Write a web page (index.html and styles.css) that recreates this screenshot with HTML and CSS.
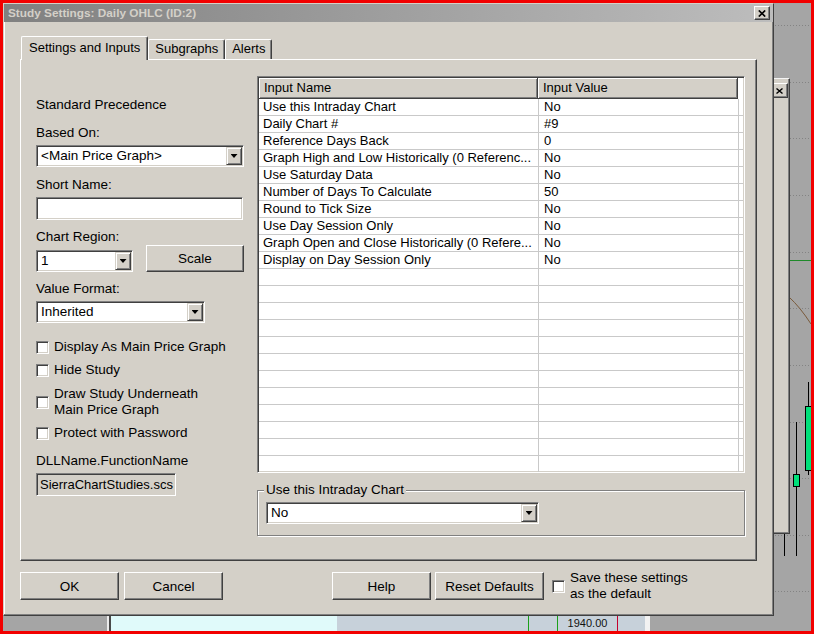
FILE: index.html
```html
<!DOCTYPE html>
<html>
<head>
<meta charset="utf-8">
<title>Study Settings: Daily OHLC (ID:2)</title>
<link rel="stylesheet" href="styles.css">
</head>
<body>
<div class="screen">
  <div class="desk">
    <svg class="chart" width="808" height="628" viewBox="0 0 808 628">
      <g stroke="#838383" stroke-width="1" stroke-dasharray="1 2">
        <line x1="700" y1="22.5" x2="808" y2="22.5"/>
        <line x1="700" y1="79.5" x2="808" y2="79.5"/>
        <line x1="700" y1="135.5" x2="808" y2="135.5"/>
        <line x1="700" y1="192.5" x2="808" y2="192.5"/>
        <line x1="700" y1="249.5" x2="808" y2="249.5"/>
        <line x1="700" y1="305.5" x2="808" y2="305.5"/>
        <line x1="700" y1="362.5" x2="808" y2="362.5"/>
        <line x1="700" y1="419.5" x2="808" y2="419.5"/>
        <line x1="700" y1="475.5" x2="808" y2="475.5"/>
        <line x1="700" y1="532.5" x2="808" y2="532.5"/>
        <line x1="700" y1="588.5" x2="808" y2="588.5"/>
      </g>
      <line x1="780" y1="257.5" x2="808" y2="257.5" stroke="#1f8a2a" stroke-width="1"/>
      <path d="M786 294 Q797 304 808 321" fill="none" stroke="#7a5a3a" stroke-width="1"/>
      <line x1="781.5" y1="525" x2="781.5" y2="553" stroke="#000"/>
      <line x1="793.5" y1="419" x2="793.5" y2="553" stroke="#000"/>
      <rect x="790.5" y="471.5" width="6" height="12" fill="#00e07a" stroke="#000"/>
      <line x1="805.5" y1="379" x2="805.5" y2="472" stroke="#000"/>
      <rect x="802.5" y="403.5" width="6" height="64" fill="#00e07a" stroke="#000"/>
    </svg>

    <div class="backwin">
      <div class="backclose">
        <svg width="7" height="6" viewBox="0 0 7 6"><path d="M0.5 0.5 L6.5 5.5 M6.5 0.5 L0.5 5.5" stroke="#000" stroke-width="1.4" fill="none"/></svg>
      </div>
    </div>

    <div class="strip">
      <div class="seg seg-gray"></div>
      <div class="seg seg-hi"></div>
      <div class="seg seg-dark"></div>
      <div class="seg seg-cyan"></div>
      <div class="seg seg-steel">
        <div class="scell scell-a"></div>
        <div class="scell scell-b"></div>
        <div class="scell scell-c">1940.00</div>
        <div class="scell scell-d"></div>
      </div>
      <div class="seg seg-white"></div>
    </div>

    <div class="dialog">
      <div class="titlebar">
        <span class="title">Study Settings: Daily OHLC (ID:2)</span>
        <div class="close">
          <svg width="8" height="7" viewBox="0 0 8 7"><path d="M0.8 0.5 L7.2 6.5 M7.2 0.5 L0.8 6.5" stroke="#000" stroke-width="1.7" fill="none"/></svg>
        </div>
      </div>

      <div class="body">
        <div class="tabs">
          <div class="tab active">Settings and Inputs</div>
          <div class="tab">Subgraphs</div>
          <div class="tab">Alerts</div>
        </div>

        <div class="panel">
          <div class="left">
            <div class="lbl">Standard Precedence</div>
            <div class="lbl lbl-first">Based On:</div>
            <div class="combo combo-based">
              <div class="combo-text">&lt;Main Price Graph&gt;</div>
              <div class="combo-btn"><span class="arrow"></span></div>
            </div>
            <div class="lbl lbl-after-combo">Short Name:</div>
            <div class="textbox"></div>
            <div class="lbl lbl-after-input">Chart Region:</div>
            <div class="region-row">
              <div class="combo combo-region">
                <div class="combo-text">1</div>
                <div class="combo-btn"><span class="arrow"></span></div>
              </div>
              <div class="btn btn-scale">Scale</div>
            </div>
            <div class="lbl lbl-after-input">Value Format:</div>
            <div class="combo combo-format">
              <div class="combo-text">Inherited</div>
              <div class="combo-btn"><span class="arrow"></span></div>
            </div>
            <div class="check check-first"><span class="box"></span><span>Display As Main Price Graph</span></div>
            <div class="check check-next"><span class="box"></span><span>Hide Study</span></div>
            <div class="check check-tall"><span class="box"></span><span>Draw Study Underneath<br>Main Price Graph</span></div>
            <div class="check check-next"><span class="box"></span><span>Protect with Password</span></div>
            <div class="lbl lbl-dll">DLLName.FunctionName</div>
            <div class="textbox textbox-ro">SierraChartStudies.scs</div>
          </div>

          <div class="right">
            <div class="grid">
              <div class="grid-head">
                <div class="hcell">Input Name</div>
                <div class="hcell">Input Value</div>
                <div class="hrest"></div>
              </div>
              <div class="row"><div class="cell">Use this Intraday Chart</div><div class="cell val">No</div><div class="cell rest"></div></div>
              <div class="row"><div class="cell">Daily Chart #</div><div class="cell val">#9</div><div class="cell rest"></div></div>
              <div class="row"><div class="cell">Reference Days Back</div><div class="cell val">0</div><div class="cell rest"></div></div>
              <div class="row"><div class="cell">Graph High and Low Historically (0 Referenc...</div><div class="cell val">No</div><div class="cell rest"></div></div>
              <div class="row"><div class="cell">Use Saturday Data</div><div class="cell val">No</div><div class="cell rest"></div></div>
              <div class="row"><div class="cell">Number of Days To Calculate</div><div class="cell val">50</div><div class="cell rest"></div></div>
              <div class="row"><div class="cell">Round to Tick Size</div><div class="cell val">No</div><div class="cell rest"></div></div>
              <div class="row"><div class="cell">Use Day Session Only</div><div class="cell val">No</div><div class="cell rest"></div></div>
              <div class="row"><div class="cell">Graph Open and Close Historically (0 Refere...</div><div class="cell val">No</div><div class="cell rest"></div></div>
              <div class="row"><div class="cell">Display on Day Session Only</div><div class="cell val">No</div><div class="cell rest"></div></div>
              <div class="row"><div class="cell"></div><div class="cell val"></div><div class="cell rest"></div></div>
              <div class="row"><div class="cell"></div><div class="cell val"></div><div class="cell rest"></div></div>
              <div class="row"><div class="cell"></div><div class="cell val"></div><div class="cell rest"></div></div>
              <div class="row"><div class="cell"></div><div class="cell val"></div><div class="cell rest"></div></div>
              <div class="row"><div class="cell"></div><div class="cell val"></div><div class="cell rest"></div></div>
              <div class="row"><div class="cell"></div><div class="cell val"></div><div class="cell rest"></div></div>
              <div class="row"><div class="cell"></div><div class="cell val"></div><div class="cell rest"></div></div>
              <div class="row"><div class="cell"></div><div class="cell val"></div><div class="cell rest"></div></div>
              <div class="row"><div class="cell"></div><div class="cell val"></div><div class="cell rest"></div></div>
              <div class="row"><div class="cell"></div><div class="cell val"></div><div class="cell rest"></div></div>
              <div class="row"><div class="cell"></div><div class="cell val"></div><div class="cell rest"></div></div>
              <div class="row"><div class="cell"></div><div class="cell val"></div><div class="cell rest"></div></div>
              <div class="row"><div class="cell"></div><div class="cell val"></div><div class="cell rest"></div></div>
            </div>

            <div class="group">
              <div class="group-title">Use this Intraday Chart</div>
              <div class="combo combo-group">
                <div class="combo-text">No</div>
                <div class="combo-btn"><span class="arrow"></span></div>
              </div>
            </div>
          </div>
        </div>

        <div class="footer">
          <div class="btn btn-foot">OK</div>
          <div class="btn btn-foot btn-cancel">Cancel</div>
          <div class="btn btn-foot btn-help">Help</div>
          <div class="btn btn-foot btn-reset">Reset Defaults</div>
          <div class="check check-save"><span class="box"></span><span>Save these settings<br>as the default</span></div>
        </div>
      </div>
    </div>
  </div>
</div>
</body>
</html>
```

FILE: styles.css
```css
* { box-sizing: border-box; }
html, body { margin: 0; padding: 0; }
body {
  width: 814px;
  height: 634px;
  overflow: hidden;
  font-family: "Liberation Sans", Arial, sans-serif;
  font-size: 13px;
  color: #000;
  background: #a5a5a5;
}
.screen {
  width: 814px;
  height: 634px;
  border: 3px solid #f20000;
  background: #a5a5a5;
}
.desk {
  position: relative;
  width: 808px;
  height: 628px;
  overflow: hidden;
}
.chart { position: absolute; left: 0; top: 0; display: block; }

/* window behind the dialog */
.backwin {
  position: absolute;
  left: 750px;
  top: 75px;
  width: 37px;
  height: 456px;
  background: #d4d0c8;
  border-top: 1px solid #f4f4f4;
  border-right: 1px solid #404040;
  border-bottom: 1px solid #404040;
  box-shadow: inset -1px -1px #808080;
  display: flex;
  justify-content: flex-end;
  align-items: flex-start;
  padding: 4px 1px 0 0;
}
.backclose {
  width: 18px;
  height: 15px;
  background: #d4d0c8;
  border: 1px solid;
  border-color: #fff #404040 #404040 #fff;
  box-shadow: inset -1px -1px #808080;
  display: flex;
  align-items: center;
  justify-content: center;
}

/* bottom strip of the chart */
.strip {
  position: absolute;
  left: 0;
  top: 613px;
  width: 808px;
  height: 15px;
  display: flex;
}
.seg { height: 15px; }
.seg-gray { width: 104px; }
.seg-hi { width: 2px; background: #ececec; }
.seg-dark { width: 2px; background: #4a4a4a; }
.seg-cyan { width: 226px; background: #e0fafa; }
.seg-steel { width: 308px; background: #c7d1da; display: flex; }
.seg-white { width: 5px; background: #f2f2f2; }
.scell { height: 15px; }
.scell-a { width: 192px; border-right: 1px solid #1aa01a; }
.scell-b { width: 29px; border-right: 1px solid #1aa01a; }
.scell-c {
  width: 60px;
  border-right: 1px solid #c4002e;
  font-size: 11px;
  line-height: 15px;
  text-align: center;
  color: #111;
}
.scell-d { flex: 1; }

/* dialog */
.dialog {
  position: absolute;
  left: 0;
  top: 0;
  width: 771px;
  height: 613px;
  background: #d4d0c8;
  border: 1px solid;
  border-color: #d4d0c8 #404040 #404040 #d4d0c8;
  box-shadow: inset -1px -1px #808080, inset 1px 1px #fff;
  display: flex;
  flex-direction: column;
}
.titlebar {
  height: 18px;
  background: linear-gradient(to right, #808080, #bdbdbd);
  display: flex;
  align-items: center;
  justify-content: space-between;
  padding: 0 3px 0 4px;
}
.title {
  font-weight: bold;
  font-size: 11.8px;
  color: #d4d0c8;
  white-space: nowrap;
}
.close {
  width: 16px;
  height: 14px;
  background: #d4d0c8;
  border: 1px solid;
  border-color: #fff #404040 #404040 #fff;
  box-shadow: inset -1px -1px #808080;
  display: flex;
  align-items: center;
  justify-content: center;
}

.body { padding: 14px 16px 0 16px; }

.tabs {
  position: relative;
  z-index: 1;
  height: 23px;
  display: flex;
  align-items: flex-end;
  padding-left: 1px;
}
.tab {
  height: 20px;
  padding: 0 6px;
  border: 1px solid;
  border-bottom: none;
  border-color: #fff #404040 #fff #fff;
  border-radius: 2px 2px 0 0;
  box-shadow: inset -1px 0 #808080;
  background: #d4d0c8;
  line-height: 18px;
  white-space: nowrap;
}
.tab.active {
  height: 24px;
  margin-bottom: -1px;
  padding: 0 7px;
  line-height: 22px;
}

.panel {
  height: 502px;
  border: 1px solid;
  border-color: #fff #404040 #404040 #fff;
  box-shadow: inset -1px -1px #808080;
  display: flex;
  gap: 13px;
  padding: 16px 11px 0 15px;
}

/* left column */
.left {
  width: 208px;
  display: flex;
  flex-direction: column;
  padding-top: 21px;
  font-size: 13.5px;
}
.lbl { height: 16px; line-height: 16px; white-space: nowrap; }
.lbl-first { margin-top: 12px; }
.lbl-after-combo { margin-top: 10px; }
.lbl-after-input { margin-top: 9px; }
.lbl-dll { margin-top: 12px; }

.combo {
  height: 22px;
  margin-top: 4px;
  display: flex;
  background: #fff;
  border: 1px solid;
  border-color: #808080 #fff #fff #808080;
  box-shadow: inset 1px 1px #404040, inset -1px -1px #d4d0c8;
  padding: 1px;
}
.combo-text {
  flex: 1;
  padding-left: 3px;
  line-height: 18px;
  white-space: nowrap;
  overflow: hidden;
}
.combo-btn {
  width: 16px;
  height: 18px;
  background: #d4d0c8;
  border: 1px solid;
  border-color: #d4d0c8 #404040 #404040 #d4d0c8;
  box-shadow: inset 1px 1px #fff, inset -1px -1px #808080;
  display: flex;
  align-items: center;
  justify-content: center;
}
.arrow {
  display: block;
  width: 7px;
  height: 4px;
  background: #000;
  clip-path: polygon(0 0, 100% 0, 50% 100%);
}
.combo-based { width: 208px; }
.combo-region { width: 97px; margin-top: 0; }
.combo-format { width: 169px; }
.combo-group { width: 273px; margin-top: 0; font-size: 13.5px; }

.textbox {
  height: 23px;
  margin-top: 4px;
  width: 207px;
  background: #fff;
  border: 1px solid;
  border-color: #808080 #fff #fff #808080;
  box-shadow: inset 1px 1px #404040, inset -1px -1px #d4d0c8;
  padding: 1px 0 0 4px;
  line-height: 19px;
  white-space: nowrap;
  overflow: hidden;
}
.textbox-ro {
  width: 140px;
  background: #d4d0c8;
  padding-left: 3px;
  font-size: 13px;
}

.region-row {
  display: flex;
  align-items: flex-end;
  justify-content: space-between;
  height: 27px;
}

.btn {
  background: #d4d0c8;
  border: 1px solid;
  border-color: #fff #404040 #404040 #fff;
  box-shadow: inset -1px -1px #808080;
  display: flex;
  align-items: center;
  justify-content: center;
  white-space: nowrap;
}
.btn-scale { width: 98px; height: 27px; }

.check {
  display: flex;
  align-items: center;
  gap: 5px;
  line-height: 16px;
  white-space: nowrap;
}
.check-first { margin-top: 16px; }
.check-next { margin-top: 7px; }
.check-tall { margin-top: 8px; }
.box {
  flex: none;
  width: 13px;
  height: 13px;
  background: #fff;
  border: 1px solid;
  border-color: #808080 #fff #fff #808080;
  box-shadow: inset 1px 1px #404040, inset -1px -1px #d4d0c8;
}

/* right column */
.right {
  width: 488px;
  display: flex;
  flex-direction: column;
}
.grid {
  height: 397px;
  background: #fff;
  border: 1px solid;
  border-color: #808080 #fff #fff #808080;
  box-shadow: inset 1px 1px #404040, inset -1px -1px #d4d0c8;
  padding: 1px;
  overflow: hidden;
}
.grid-head {
  display: grid;
  grid-template-columns: 279px 200px 1fr;
  height: 21px;
}
.hcell {
  background: #d4d0c8;
  border-right: 1px solid #404040;
  border-bottom: 1px solid #404040;
  box-shadow: inset 1px 1px #fff, inset -1px -1px #808080;
  padding-left: 5px;
  line-height: 20px;
  white-space: nowrap;
}
.hrest { background: #fff; }
.row {
  display: grid;
  grid-template-columns: 280px 200px 1fr;
  height: 17px;
}
.cell {
  border-right: 1px solid #c9c9c9;
  border-bottom: 1px solid #c9c9c9;
  padding-left: 4px;
  line-height: 16px;
  white-space: nowrap;
  overflow: hidden;
}
.cell.val { padding-left: 5px; }
.cell.rest { border-right: none; }

.group {
  margin-top: 17px;
  border: 1px solid #808080;
  box-shadow: inset 1px 1px #fff, 1px 1px #fff;
  padding: 0 8px 11px 8px;
}
.group-title {
  display: table;
  margin: -9px 0 4px -2px;
  padding: 0 2px;
  background: #d4d0c8;
  line-height: 16px;
  white-space: nowrap;
  font-size: 13.5px;
}

/* footer */
.footer {
  display: flex;
  align-items: center;
  height: 28px;
  margin-top: 11px;
  font-size: 13.5px;
}
.btn-foot { width: 99px; height: 28px; }
.btn-cancel { margin-left: 5px; }
.btn-help { margin-left: 109px; }
.btn-reset { width: 109px; margin-left: 4px; }
.check-save { margin-left: 8px; }
```
